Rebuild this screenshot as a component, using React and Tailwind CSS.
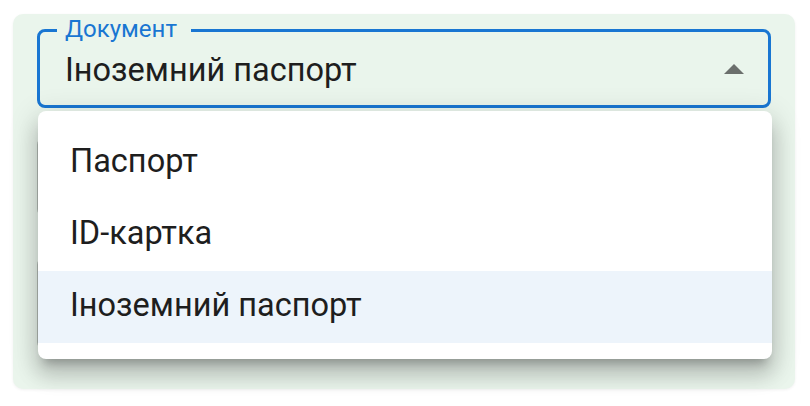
import React from 'react';

const options = ['Паспорт', 'ID-картка', 'Іноземний паспорт'];

const DocumentSelect = () => {
  const selected = 'Іноземний паспорт';

  return (
    <div className="w-[810px] h-[406px] bg-white pt-[14px] pl-[13px] font-['Roboto',sans-serif]">
      <div className="relative w-[782px] h-[375px] rounded-[10px] bg-[#eaf5ec] px-[24px] pt-[15px] flex flex-col shadow-[0_1px_3px_rgba(0,0,0,0.06)]">
        {/* active select */}
        <div className="relative h-[79px] border-[3px] border-[#1976d2] rounded-[8px] flex items-center pl-[25px] pr-[24px] pt-1">
          <span className="absolute left-[17px] -top-[15px] bg-[#eaf5ec] pl-2 pr-[14px] text-[24px] leading-none text-[#1976d2]">
            Документ
          </span>
          <span className="flex-1 text-[32.5px] leading-none text-[#1e1e1e]">{selected}</span>
          <svg width="20" height="10" viewBox="0 0 20 10" className="-mt-1">
            <path d="M0 10 L10 0 L20 10 Z" fill="#6b6f6c" />
          </svg>
        </div>

        {/* fields under the open menu */}
        <div className="mt-[29px] h-[80px] border-2 border-[#b4bcb5] rounded-[8px]" />
        <div className="mt-[40px] h-[93px] border-2 border-[#b4bcb5] rounded-[8px]" />

        {/* dropdown menu */}
        <div className="absolute left-[25px] top-[97px] w-[734px] rounded-[8px] bg-white py-4 shadow-[0_10px_10px_-6px_rgba(0,0,0,0.22),0_16px_20px_2px_rgba(0,0,0,0.15),0_6px_28px_4px_rgba(0,0,0,0.12)]">
          {options.map((opt) => (
            <div
              key={opt}
              className={`h-[72px] flex items-center px-8 pb-1 text-[32.5px] leading-none text-[#1e1e1e] ${
                opt === selected ? 'bg-[#edf4fb]' : ''
              }`}
            >
              {opt}
            </div>
          ))}
        </div>
      </div>
    </div>
  );
};

export default DocumentSelect;
